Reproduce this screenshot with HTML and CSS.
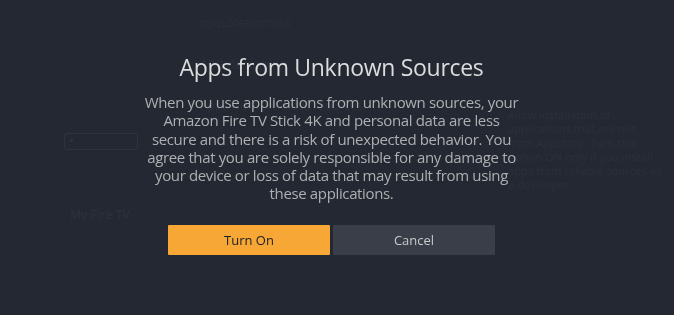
FILE: index.html
```html
<!DOCTYPE html>
<html lang="en">
<head>
<meta charset="utf-8">
<title>Apps from Unknown Sources</title>
<link rel="stylesheet" href="styles.css">
</head>
<body>
<div class="page">
  <div class="col-left">
    <div class="field"><span class="dot"></span></div>
    <div class="menu-label">My Fire TV</div>
  </div>
  <div class="col-mid">
    <div class="section">DEVELOPER OPTIONS</div>
    <div class="item">ADB debugging</div>
    <div class="item item2">Apps from Unknown Sources</div>
  </div>
  <div class="col-right">
    <p class="hint">Allow installation of<br>applications that are not<br>from Appstore. Turn this<br>option ON only if you install<br>apps from reliable sources as<br>a developer.</p>
  </div>
</div>
<div class="overlay">
  <div class="dialog">
    <h1 class="title">Apps from Unknown Sources</h1>
    <p class="message">When you use applications from unknown sources, your<br>Amazon Fire TV Stick 4K and personal data are less<br>secure and there is a risk of unexpected behavior. You<br>agree that you are solely responsible for any damage to<br>your device or loss of data that may result from using<br>these applications.</p>
    <div class="actions">
      <button class="btn btn-primary">Turn On</button>
      <button class="btn btn-secondary">Cancel</button>
    </div>
  </div>
</div>
</body>
</html>
```
FILE: styles.css
```css
* { box-sizing: border-box; }
html, body { margin: 0; height: 100%; }
body {
  background: #232833;
  font-family: "Open Sans", "Noto Sans", sans-serif;
  overflow: hidden;
}
.page {
  display: flex;
  height: 315px;
  padding: 0 0 0 64px;
  color: #2b303b;
}
.col-left {
  width: 74px;
  padding-top: 133px;
  display: flex;
  flex-direction: column;
}
.field {
  height: 17px;
  border: 1px solid #2e333e;
  border-radius: 2px;
}
.dot {
  display: block;
  width: 3px; height: 3px;
  border-radius: 50%;
  background: #30353f;
  margin: 5px 0 0 5px;
}
.menu-label {
  margin: 56px 0 0 6px;
  font-size: 12px;
  font-weight: 600;
  white-space: nowrap;
}
.col-mid {
  width: 308px;
  margin-left: 62px;
  padding-top: 17px;
  font-size: 9px;
}
.item { margin-top: 26px; font-size: 12px; }
.item2 { margin-top: 24px; }
.col-right {
  padding-top: 108px;
}
.hint {
  margin: 0;
  font-size: 11px;
  line-height: 14px;
  white-space: nowrap;
  letter-spacing: 0.1px;
}
.overlay {
  position: fixed;
  inset: 0;
  display: flex;
  justify-content: center;
  padding-right: 11px;
}
.dialog {
  display: flex;
  flex-direction: column;
  align-items: center;
  padding-top: 51px;
}
.title {
  margin: 0;
  font-size: 23px;
  font-weight: 400;
  letter-spacing: -0.3px;
  color: #dcdcdd;
  line-height: 32px;
}
.message {
  margin: 10px 0 0;
  font-size: 15px;
  letter-spacing: -0.36px;
  line-height: 18.3px;
  color: #aeafb1;
  text-align: center;
}
.actions {
  display: flex;
  gap: 3px;
  margin-top: 22px;
}
.btn {
  width: 162px;
  height: 30px;
  border: 0;
  border-radius: 1px;
  font-family: inherit;
  font-size: 13px;
  font-weight: 500;
  padding: 0;
}
.btn-primary { background: #f6a735; color: #1d1f22; }
.btn-secondary { background: #3a3e48; color: #c8c9cb; }
```
